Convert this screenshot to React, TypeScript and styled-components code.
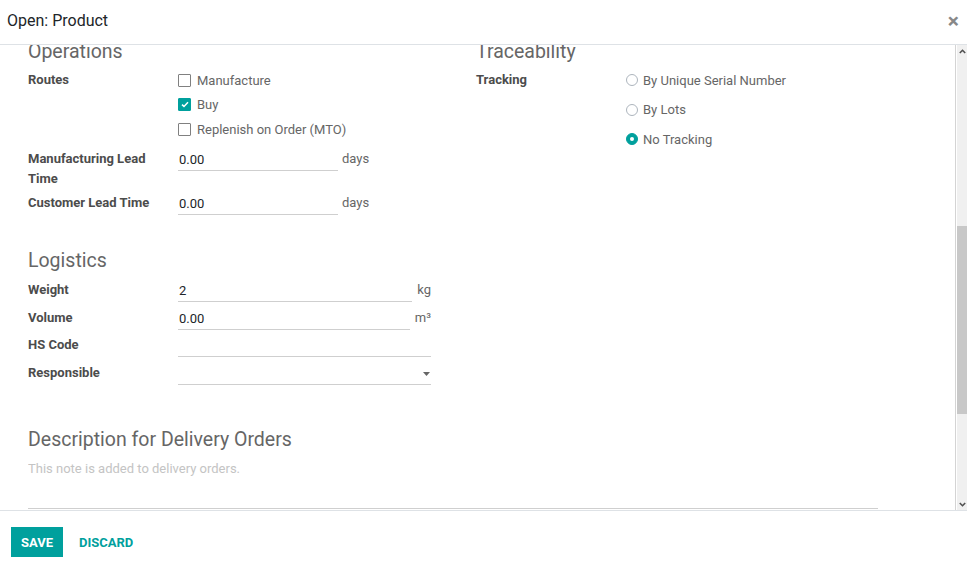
import { FC, useLayoutEffect, useRef, useState } from 'react';
import styled, { createGlobalStyle } from 'styled-components';
import { Camera, Boxes, TrendingUp, ArrowLeftRight, RefreshCw } from 'lucide-react';

const teal = '#00A09D';
const line = '#dee2e6';
const underline = '#cfcfcf';
const railBg = 'linear-gradient(to right, #d4d4d4 0 1px, #fff 1px 2px, #f0f0f0 2px)';

const GlobalStyle = createGlobalStyle`
  html, body, #root {
    margin: 0;
    height: 100%;
  }
  body {
    font-family: Roboto, 'Noto Sans', sans-serif;
    font-size: 13px;
    color: #4c4c4c;
    background: #fff;
  }
  * {
    box-sizing: border-box;
  }
`;

const Dialog = styled.div`
  display: flex;
  flex-direction: column;
  height: 100vh;
  background: #fff;
`;

const Header = styled.header`
  flex: 0 0 45px;
  display: flex;
  align-items: center;
  justify-content: space-between;
  padding: 0 7px 2px 7px;
  border-bottom: 1px solid ${line};
`;

const Title = styled.h4`
  margin: 0;
  font-size: 16px;
  font-weight: 400;
  line-height: 20px;
  color: #212529;
`;

const CloseButton = styled.button`
  border: 0;
  background: none;
  padding: 0 1px 0 0;
  font-family: Roboto, sans-serif;
  font-size: 21px;
  font-weight: 700;
  line-height: 1;
  color: #888;
  cursor: pointer;
`;

const BodyFrame = styled.div`
  flex: 1;
  min-height: 0;
  display: flex;
`;

const Body = styled.div`
  flex: 1;
  min-width: 0;
  overflow-y: scroll;
  scrollbar-width: none;

  &::-webkit-scrollbar {
    display: none;
  }
`;

const Rail = styled.div`
  flex: 0 0 12px;
  display: flex;
  flex-direction: column;
  background: ${railBg};
`;

const RailButton = styled.div`
  flex: 0 0 12px;
  display: flex;
  align-items: center;
  justify-content: center;
  padding-left: 2px;
`;

const Track = styled.div`
  flex: 1;
  min-height: 0;
  display: flex;
  flex-direction: column;
`;

const Thumb = styled.div`
  flex: 0 0 auto;
  margin-left: 2px;
  background: #c8c8c8;
`;

const Sheet = styled.div`
  padding: 16px 28px 87px;
`;

const ButtonBox = styled.div`
  display: flex;
  justify-content: flex-end;
  border-bottom: 1px solid ${line};
`;

const SmartButton = styled.div`
  display: flex;
  align-items: center;
  gap: 8px;
  width: 132px;
  height: 44px;
  padding: 0 10px;
  border-left: 1px solid ${line};
  color: #666;
  font-size: 12px;
  line-height: 15px;

  svg {
    color: #999;
    flex: 0 0 auto;
  }
`;

const SmartValue = styled.div`
  font-weight: 700;
  color: ${teal};
`;

const TitleBlock = styled.div`
  display: flex;
  justify-content: space-between;
  margin-top: 16px;
  height: 120px;
`;

const TitleFields = styled.div`
  display: flex;
  flex-direction: column;
  gap: 2px;
`;

const SmallLabel = styled.div`
  font-weight: 700;
  line-height: 20px;
`;

const NameField = styled.div`
  width: 520px;
  font-size: 26px;
  line-height: 36px;
  color: #212529;
  border-bottom: 1px solid ${underline};
`;

const InlineChecks = styled.div`
  display: flex;
  gap: 24px;
  margin-top: 8px;
`;

const ImageBox = styled.div`
  width: 116px;
  height: 116px;
  border: 1px solid ${line};
  display: flex;
  align-items: center;
  justify-content: center;
  color: #bbb;
`;

const Tabs = styled.nav`
  display: flex;
  margin-top: 16px;
  border-bottom: 1px solid ${line};
`;

const Tab = styled.div<{ $active?: boolean }>`
  padding: 10px 16px;
  line-height: 19px;
  margin-bottom: -1px;
  border: 1px solid ${({ $active }) => ($active ? line : 'transparent')};
  border-bottom-color: ${({ $active }) => ($active ? '#fff' : 'transparent')};
  color: ${({ $active }) => ($active ? '#4c4c4c' : teal)};
  background: #fff;
`;

const Pane = styled.div`
  padding-top: 20px;
`;

const Section = styled.section<{ $gap?: number }>`
  margin-top: ${({ $gap }) => $gap ?? 0}px;
`;

const SectionTitle = styled.div<{ $mb?: number }>`
  font-size: 19.5px;
  line-height: 24px;
  color: #666;
  margin-bottom: ${({ $mb }) => $mb ?? 8}px;
`;

const Columns = styled.div`
  display: grid;
  grid-template-columns: 448px 448px;
`;

const FieldRow = styled.div<{ $gap?: number }>`
  display: flex;
  align-items: flex-start;
  margin-top: ${({ $gap }) => $gap ?? 0}px;
`;

const Label = styled.label`
  flex: 0 0 150px;
  padding-right: 8px;
  font-weight: 700;
  line-height: 20px;
  color: #4c4c4c;
`;

const FieldCell = styled.div<{ $wide?: boolean }>`
  flex: ${({ $wide }) => ($wide ? '1 1 auto' : '0 0 253px')};
  display: flex;
  align-items: flex-start;
  min-width: 0;
`;

const TextInput = styled.input<{ $width?: number }>`
  flex: ${({ $width }) => ($width ? `0 0 ${$width}px` : '1 1 auto')};
  min-width: 0;
  height: 22px;
  padding: 0 1px;
  border: 0;
  border-bottom: 1px solid ${underline};
  border-radius: 0;
  outline: none;
  font-family: Roboto, sans-serif;
  font-size: 13px;
  color: #212529;
  background: transparent;
`;

const Unit = styled.span<{ $gap?: number }>`
  margin-left: ${({ $gap }) => $gap ?? 5}px;
  line-height: 20px;
  color: #666;
`;

const SelectBox = styled.div`
  flex: 1 1 auto;
  height: 22px;
  display: flex;
  align-items: center;
  justify-content: flex-end;
  padding-right: 1px;
  border-bottom: 1px solid ${underline};
  color: #666;
`;

const CheckList = styled.div`
  display: flex;
  flex-direction: column;
  gap: 4.5px;
`;

const CheckItem = styled.label`
  display: flex;
  align-items: center;
  gap: 6px;
  height: 20px;
  color: #666;
`;

const Box = styled.span<{ $checked?: boolean }>`
  width: 13px;
  height: 13px;
  display: inline-flex;
  align-items: center;
  justify-content: center;
  border: ${({ $checked }) => ($checked ? `0.5px solid ${teal}` : '1.5px solid #808080')};
  border-radius: 1px;
  background: ${({ $checked }) => ($checked ? teal : '#fff')};
`;

const RadioList = styled.div`
  display: flex;
  flex-direction: column;
  gap: 9.5px;
`;

const RadioItem = styled.label`
  display: flex;
  align-items: center;
  gap: 5px;
  height: 20px;
  color: #666;
`;

const RadioDot = styled.span<{ $checked?: boolean }>`
  width: 12px;
  height: 12px;
  border-radius: 50%;
  border: 1px solid ${({ $checked }) => ($checked ? teal : '#adb5bd')};
  background: ${({ $checked }) => ($checked ? teal : '#fff')};
  display: inline-flex;
  align-items: center;
  justify-content: center;

  &::after {
    content: '';
    width: 4px;
    height: 4px;
    border-radius: 50%;
    background: ${({ $checked }) => ($checked ? '#fff' : 'transparent')};
  }
`;

const NoteArea = styled.textarea`
  display: block;
  width: 850px;
  height: 50px;
  padding: 0;
  border: 0;
  border-bottom: 1px solid ${underline};
  border-radius: 0;
  outline: none;
  resize: none;
  font-family: Roboto, sans-serif;
  font-size: 13px;
  line-height: 20px;
  color: #212529;
  background: transparent;

  &::placeholder {
    color: #c4c4c4;
  }
`;

const Footer = styled.footer`
  flex: 0 0 61px;
  display: flex;
  align-items: flex-start;
  gap: 6px;
  padding: 16px 11px 0;
  border-top: 1px solid ${line};
`;

const PrimaryButton = styled.button`
  height: 30px;
  padding: 0 10px;
  border: 0;
  border-radius: 0;
  background: ${teal};
  color: #fff;
  font-family: Roboto, sans-serif;
  font-size: 13px;
  font-weight: 700;
  text-transform: uppercase;
  cursor: pointer;
`;

const LinkButton = styled(PrimaryButton)`
  background: transparent;
  color: ${teal};
`;

const Check: FC<{ label: string; checked?: boolean }> = ({ label, checked }) => (
  <CheckItem>
    <Box $checked={checked}>
      {checked && (
        <svg width="8" height="7" viewBox="0 0 8 7">
          <path d="M1 3.6 L3 5.4 L7 1.2" fill="none" stroke="#fff" strokeWidth="1.5" />
        </svg>
      )}
    </Box>
    {label}
  </CheckItem>
);

const Radio: FC<{ label: string; checked?: boolean }> = ({ label, checked }) => (
  <RadioItem>
    <RadioDot $checked={checked} />
    {label}
  </RadioItem>
);

const Caret = () => (
  <svg width="7" height="4" viewBox="0 0 7 4">
    <path d="M0 0 H7 L3.5 4 Z" fill="#666" />
  </svg>
);

const Chevron: FC<{ up?: boolean }> = ({ up }) => (
  <svg width="7" height="5" viewBox="0 0 7 5">
    <path d={up ? 'M0.8 4 L3.5 1.3 L6.2 4' : 'M0.8 1 L3.5 3.7 L6.2 1'} fill="none" stroke="#505050" strokeWidth="1.6" />
  </svg>
);

export default function App() {
  const bodyRef = useRef<HTMLDivElement>(null);
  const opsRef = useRef<HTMLDivElement>(null);
  const trackRef = useRef<HTMLDivElement>(null);
  const [thumb, setThumb] = useState({ top: 0, height: 0 });

  useLayoutEffect(() => {
    const body = bodyRef.current;
    const ops = opsRef.current;
    const track = trackRef.current;
    if (!body || !ops || !track) return;
    const d = ops.getBoundingClientRect().top - body.getBoundingClientRect().top;
    body.scrollTop += d + 5;

    const update = () => {
      const trackH = track.clientHeight;
      setThumb({
        top: (body.scrollTop / body.scrollHeight) * trackH,
        height: (body.clientHeight / body.scrollHeight) * trackH,
      });
    };
    update();
    body.addEventListener('scroll', update);
    return () => body.removeEventListener('scroll', update);
  }, []);

  return (
    <>
      <GlobalStyle />
      <Dialog>
        <Header>
          <Title>Open: Product</Title>
          <CloseButton aria-label="Close">×</CloseButton>
        </Header>

        <BodyFrame>
          <Body ref={bodyRef}>
            <Sheet>
              <ButtonBox>
                <SmartButton>
                  <Boxes size={20} />
                  <div>
                    <SmartValue>0.00 Units</SmartValue>
                    On Hand
                  </div>
                </SmartButton>
                <SmartButton>
                  <TrendingUp size={20} />
                  <div>
                    <SmartValue>0.00 Units</SmartValue>
                    Forecasted
                  </div>
                </SmartButton>
                <SmartButton>
                  <ArrowLeftRight size={20} />
                  <div>
                    <SmartValue>In: 0</SmartValue>
                    Out: 0
                  </div>
                </SmartButton>
                <SmartButton>
                  <RefreshCw size={20} />
                  <div>
                    <SmartValue>0</SmartValue>
                    Min / Max
                  </div>
                </SmartButton>
              </ButtonBox>

              <TitleBlock>
                <TitleFields>
                  <SmallLabel>Product Name</SmallLabel>
                  <NameField>Product</NameField>
                  <InlineChecks>
                    <Check label="Can be Sold" checked />
                    <Check label="Can be Purchased" checked />
                  </InlineChecks>
                </TitleFields>
                <ImageBox>
                  <Camera size={28} />
                </ImageBox>
              </TitleBlock>

              <Tabs>
                <Tab>General Information</Tab>
                <Tab>Sales</Tab>
                <Tab>Purchase</Tab>
                <Tab $active>Inventory</Tab>
                <Tab>Accounting</Tab>
              </Tabs>

              <Pane>
                <Section>
                  <SectionTitle>Stock</SectionTitle>
                  <FieldRow>
                    <Label>Quantity On Hand</Label>
                    <FieldCell>
                      <TextInput defaultValue="0.00" readOnly />
                    </FieldCell>
                  </FieldRow>
                  <FieldRow $gap={5.5}>
                    <Label>Forecasted Quantity</Label>
                    <FieldCell>
                      <TextInput defaultValue="0.00" readOnly />
                    </FieldCell>
                  </FieldRow>
                  <FieldRow $gap={5.5}>
                    <Label>Reordering Rules</Label>
                    <FieldCell>
                      <TextInput defaultValue="0" readOnly />
                    </FieldCell>
                  </FieldRow>
                </Section>

                <Section $gap={32}>
                  <Columns>
                    <div>
                      <SectionTitle ref={opsRef} $mb={6}>
                        Operations
                      </SectionTitle>
                      <FieldRow>
                        <Label>Routes</Label>
                        <FieldCell>
                          <CheckList>
                            <Check label="Manufacture" />
                            <Check label="Buy" checked />
                            <Check label="Replenish on Order (MTO)" />
                          </CheckList>
                        </FieldCell>
                      </FieldRow>
                      <FieldRow $gap={10}>
                        <Label>Manufacturing Lead Time</Label>
                        <FieldCell>
                          <TextInput $width={160} defaultValue="0.00" />
                          <Unit $gap={4}>days</Unit>
                        </FieldCell>
                      </FieldRow>
                      <FieldRow $gap={4}>
                        <Label>Customer Lead Time</Label>
                        <FieldCell>
                          <TextInput $width={160} defaultValue="0.00" />
                          <Unit $gap={4}>days</Unit>
                        </FieldCell>
                      </FieldRow>
                    </div>

                    <div>
                      <SectionTitle $mb={6}>Traceability</SectionTitle>
                      <FieldRow>
                        <Label>Tracking</Label>
                        <FieldCell $wide>
                          <RadioList>
                            <Radio label="By Unique Serial Number" />
                            <Radio label="By Lots" />
                            <Radio label="No Tracking" checked />
                          </RadioList>
                        </FieldCell>
                      </FieldRow>
                    </div>
                  </Columns>
                </Section>

                <Section $gap={34}>
                  <SectionTitle $mb={7}>Logistics</SectionTitle>
                  <FieldRow>
                    <Label>Weight</Label>
                    <FieldCell>
                      <TextInput defaultValue="2" />
                      <Unit>kg</Unit>
                    </FieldCell>
                  </FieldRow>
                  <FieldRow $gap={5.5}>
                    <Label>Volume</Label>
                    <FieldCell>
                      <TextInput defaultValue="0.00" />
                      <Unit>m³</Unit>
                    </FieldCell>
                  </FieldRow>
                  <FieldRow $gap={5}>
                    <Label>HS Code</Label>
                    <FieldCell>
                      <TextInput defaultValue="" />
                    </FieldCell>
                  </FieldRow>
                  <FieldRow $gap={6.5}>
                    <Label>Responsible</Label>
                    <FieldCell>
                      <SelectBox>
                        <Caret />
                      </SelectBox>
                    </FieldCell>
                  </FieldRow>
                </Section>

                <Section $gap={42.5}>
                  <SectionTitle $mb={7}>Description for Delivery Orders</SectionTitle>
                  <NoteArea placeholder="This note is added to delivery orders." />
                </Section>

                <Section $gap={42.5}>
                  <SectionTitle $mb={7}>Description for Receptions</SectionTitle>
                  <NoteArea placeholder="This note is added to receipt orders (e.g. where to store the product in the warehouse)." />
                </Section>
              </Pane>
            </Sheet>
          </Body>

          <Rail>
            <RailButton>
              <Chevron up />
            </RailButton>
            <Track ref={trackRef}>
              <Thumb style={{ marginTop: thumb.top, height: thumb.height }} />
            </Track>
            <RailButton>
              <Chevron />
            </RailButton>
          </Rail>
        </BodyFrame>

        <Footer>
          <PrimaryButton>Save</PrimaryButton>
          <LinkButton>Discard</LinkButton>
        </Footer>
      </Dialog>
    </>
  );
}
